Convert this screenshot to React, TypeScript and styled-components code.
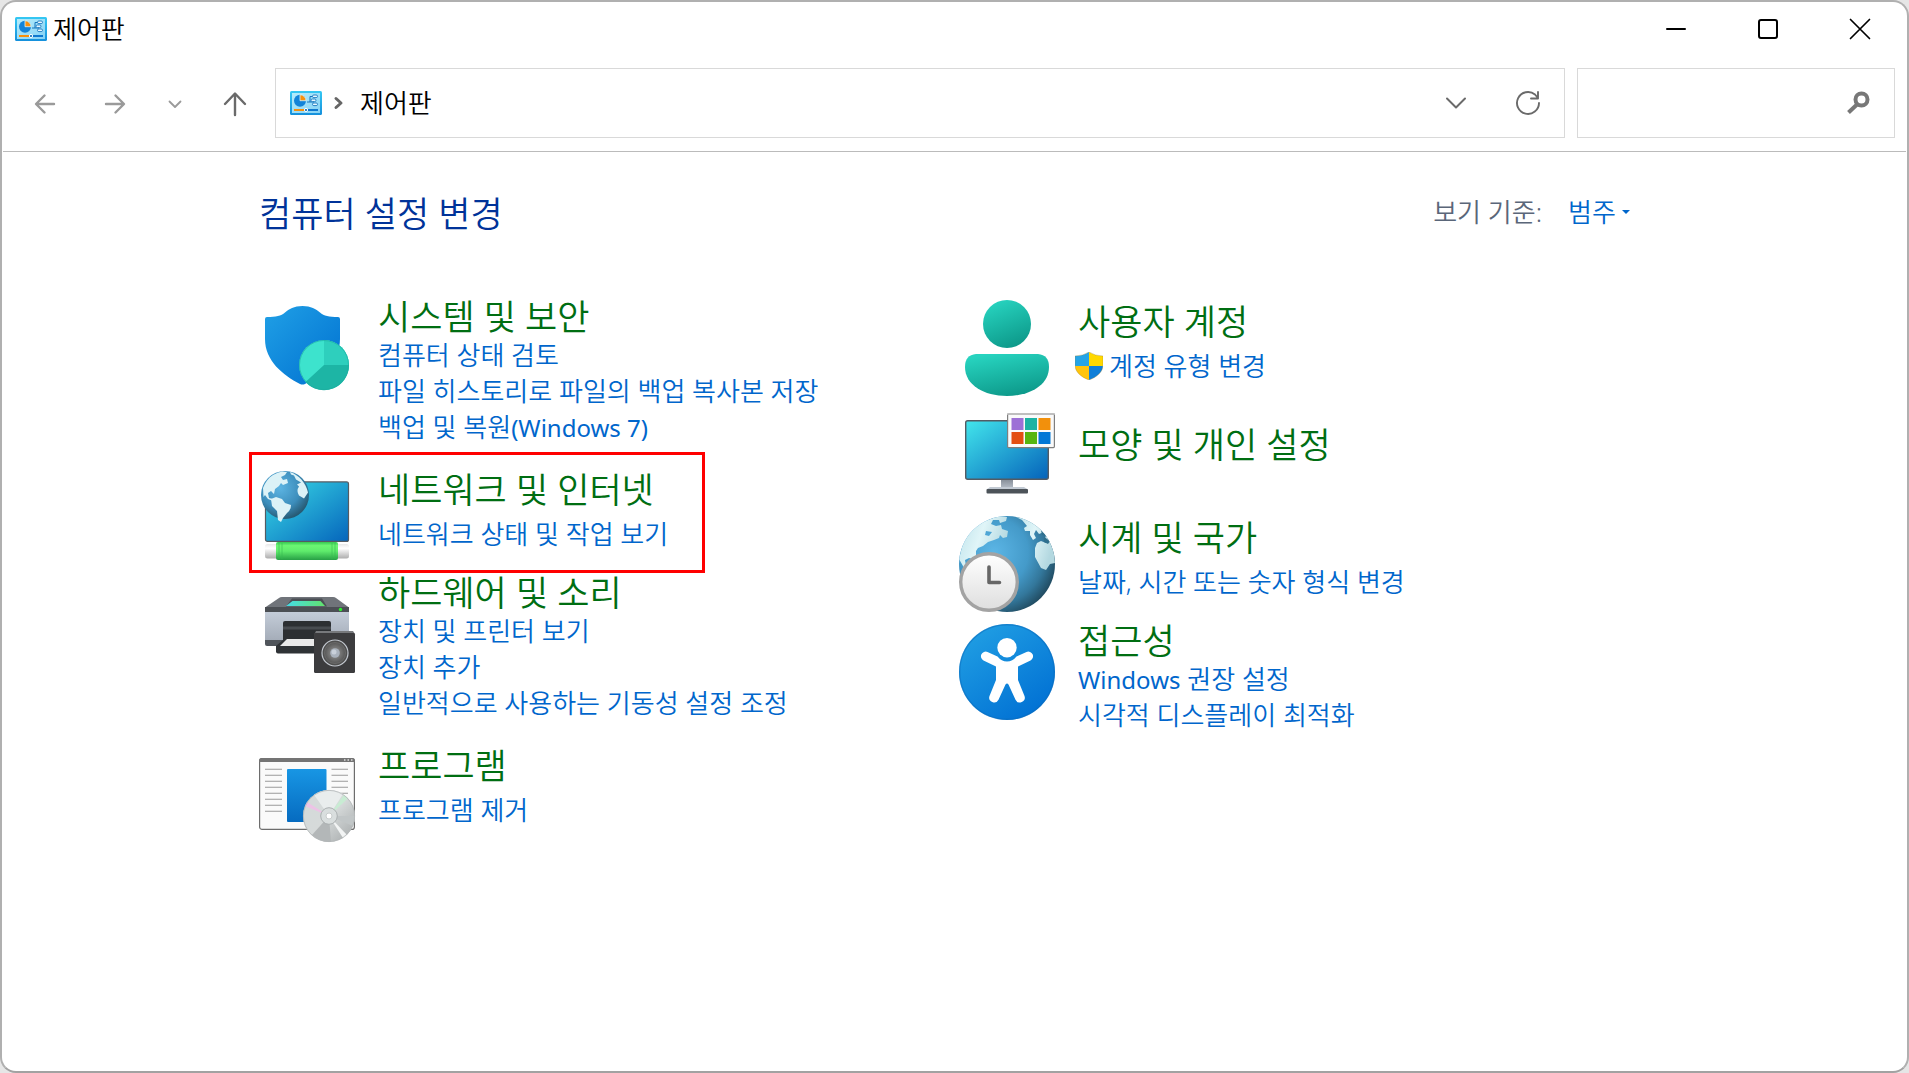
import React from "react";
import styled, { createGlobalStyle } from "styled-components";

const GlobalStyle = createGlobalStyle`
  *, *::before, *::after { box-sizing: border-box; }
  body {
    margin: 0;
    background: #e6e6e6;
    font-family: "Noto Sans", "Noto Sans CJK KR", sans-serif;
    font-size: 26px;
    font-weight: 350;
    color: #000;
  }
  h1, h2, ul { margin: 0; padding: 0; font-weight: inherit; }
  button, input, select { font: inherit; color: inherit; margin: 0; }
`;

const Window = styled.div`
  min-height: 100vh;
  border: 2px solid #b0b0b0;
  border-bottom-color: #a2a2a2;
  border-radius: 16px;
  background: #fff;
  overflow: hidden;
`;

const TitleBar = styled.header`
  display: flex;
  align-items: center;
  justify-content: space-between;
  height: 54px;
  padding: 0 1px 0 13px;
`;

const Caption = styled.div`
  display: flex;
  align-items: center;
  gap: 6px;
  line-height: 36px;
`;

const CaptionButtons = styled.div`
  display: flex;
`;

const CaptionButton = styled.button`
  display: grid;
  place-items: center;
  width: 92px;
  height: 54px;
  padding: 0;
  border: 0;
  background: transparent;
`;

const NavBar = styled.div`
  display: flex;
  align-items: center;
  margin: 0 1px;
  padding: 12px 11px 13px 7px;
  border-bottom: 1px solid #bbb;
`;

const NavButtons = styled.div`
  display: flex;
  padding-top: 2px;
  margin-right: 5px;
`;

const NavButton = styled.button<{ $width: number; $muted?: boolean }>`
  display: grid;
  place-items: center;
  width: ${(p) => p.$width}px;
  height: 68px;
  padding: 0;
  border: 0;
  background: transparent;
  color: ${(p) => (p.$muted ? "#9a9a9a" : "#6a6a6a")};
`;

const AddressBar = styled.nav`
  flex: 1;
  display: flex;
  align-items: center;
  gap: 12px;
  height: 70px;
  padding: 0 0 0 14px;
  border: 1px solid #d9d9d9;
`;

const Crumb = styled.a`
  margin-left: 5px;
  color: #000;
  text-decoration: none;
  line-height: 36px;
`;

const AddressActions = styled.div`
  display: flex;
  margin-left: auto;
`;

const SearchBox = styled.label`
  display: flex;
  align-items: center;
  width: 318px;
  height: 70px;
  margin-left: 12px;
  padding: 0 24px 0 12px;
  border: 1px solid #d9d9d9;
`;

const SearchInput = styled.input`
  flex: 1;
  min-width: 0;
  border: 0;
  outline: 0;
  background: transparent;
`;

const Content = styled.main`
  max-width: 1391px;
  margin: 0 auto;
  padding: 40px 0;
`;

const PageHeader = styled.div`
  display: flex;
  align-items: flex-start;
  justify-content: space-between;
  height: 44px;
  margin-bottom: 64px;
  padding-right: 20px;
`;

const PageTitle = styled.h1`
  font-size: 35px;
  line-height: 44px;
  color: #003399;
`;

const ViewBy = styled.div`
  display: flex;
  align-items: center;
  gap: 6px;
  line-height: 40px;
`;

const ViewByLabel = styled.label`
  margin-right: 20px;
  color: #5a6679;
`;

const ViewBySelect = styled.select`
  appearance: none;
  padding: 0;
  border: 0;
  background: transparent;
  color: #0066cc;
  line-height: 40px;
`;

const Columns = styled.div`
  display: grid;
  grid-template-columns: repeat(2, minmax(0, 1fr));
  column-gap: 9px;
  align-items: start;
`;

const Column = styled.div`
  display: flex;
  flex-direction: column;
  align-items: flex-start;
  gap: 12px;
`;

const Category = styled.section<{ $highlighted?: boolean }>`
  position: relative;
  display: flex;
  gap: 23px;
  min-height: 96px;

  ${(p) =>
    p.$highlighted &&
    `&::after {
      content: "";
      position: absolute;
      inset: -16px -37px -9px -10px;
      border: 3px solid #ff0000;
      pointer-events: none;
    }`}
`;

const CategoryText = styled.div<{ $layout: Layout }>`
  margin-top: ${(p) => ({ dense: "-3px", single: "2px", title: "17px" })[p.$layout]};
  padding-bottom: ${(p) => (p.$layout === "dense" ? "11px" : "0")};
`;

const CategoryTitle = styled.h2`
  font-size: 35px;
  line-height: 40px;
`;

const CategoryLink = styled.a`
  color: #006e12;
  text-decoration: none;
  &:hover { text-decoration: underline; }
`;

const TaskList = styled.ul<{ $layout: Layout; $shielded?: boolean }>`
  list-style: none;
  margin-top: ${(p) => (p.$layout === "single" ? "6px" : "0")};
  margin-left: ${(p) => (p.$shielded ? "-3px" : "0")};
`;

const TaskLink = styled.a`
  display: flex;
  align-items: center;
  gap: 6px;
  color: #0066cc;
  line-height: 36px;
  text-decoration: none;
  white-space: nowrap;
  &:hover { text-decoration: underline; }
`;

const Latin = styled.span`
  font-size: 24px;
  font-weight: 400;
  line-height: 1;
`;

const CategoryIcon = styled.svg`
  flex: none;
  display: block;
  width: 96px;
  height: 96px;
  overflow: visible;
`;

const LineIcon = styled.svg`
  display: block;
  overflow: visible;
  fill: none;
  stroke: currentColor;
  stroke-linecap: round;
  stroke-linejoin: round;
`;

type Layout = "dense" | "single" | "title";

function ControlPanelIcon() {
  return (
    <svg width="32" height="24" viewBox="0 0 32 24" aria-hidden="true">
      <defs>
        <linearGradient id="cpFrame" x1="0" y1="0" x2="0" y2="1">
          <stop offset="0" stopColor="#35c8f3" />
          <stop offset="1" stopColor="#1590dc" />
        </linearGradient>
        <linearGradient id="cpFace" x1="0" y1="0" x2="1" y2="1">
          <stop offset="0" stopColor="#b5ecfb" />
          <stop offset="1" stopColor="#86d2f5" />
        </linearGradient>
      </defs>
      <rect width="32" height="24" rx="1.5" fill="url(#cpFrame)" />
      <rect x="2" y="2" width="28" height="20" fill="url(#cpFace)" />
      <circle cx="10" cy="9.7" r="6" fill="#1283d8" />
      <path d="M10 9.7V3.7a6 6 0 0 1 6 6z" fill="#f7900d" stroke="#d9f5fd" strokeWidth=".8" />
      <path d="M17 11h3V5.5h4M20 11h4" fill="none" stroke="#1674bd" strokeWidth="1" />
      <rect x="22.5" y="4" width="5" height="2.6" rx="1.3" fill="#e9f9ff" stroke="#1674bd" strokeWidth=".9" />
      <rect x="21" y="8" width="5" height="2.6" rx="1.3" fill="#e9f9ff" stroke="#1674bd" strokeWidth=".9" />
      <rect x="22.5" y="12" width="5" height="2.6" rx="1.3" fill="#e9f9ff" stroke="#1674bd" strokeWidth=".9" />
      <path d="M4 19h11" stroke="#f7900d" strokeWidth="2" />
      <path d="M17 19h11" stroke="#0f78cf" strokeWidth="2" />
      <circle cx="16" cy="19" r="1.6" fill="#1674bd" stroke="#fff" strokeWidth="1" />
    </svg>
  );
}

function SecurityIcon() {
  return (
    <CategoryIcon viewBox="0 0 96 96" aria-hidden="true">
      <defs>
        <linearGradient id="secShield" x1="0" y1="0" x2="1" y2="1">
          <stop offset="0" stopColor="#20a0e6" />
          <stop offset="1" stopColor="#0070d0" />
        </linearGradient>
      </defs>
      <path
        d="M43.5 6C52 6 57 9 61 12.5c4 3.5 9 4.5 18 4.5q2 0 2 2v20c0 22-18 36-35 45q-2.5 1-5 0C24 75 6 61 6 39V19q0-2 2-2c9 0 14-1 18-4.5C30 9 35 6 43.5 6z"
        fill="url(#secShield)"
      />
      <circle cx="65" cy="65" r="25" fill="#3de3cd" />
      <path d="M65 65V40a25 25 0 0 1 25 25z" fill="#2ecfbd" />
      <path d="M65 65H90a25 25 0 0 1-43.5 17z" fill="#1db5a5" />
      <circle cx="65" cy="65" r="24.5" fill="none" stroke="#1eac9e" strokeOpacity=".6" />
    </CategoryIcon>
  );
}

function NetworkIcon() {
  return (
    <CategoryIcon viewBox="0 0 96 96" aria-hidden="true">
      <defs>
        <linearGradient id="netScreen" x1="0" y1="0" x2="1" y2="1">
          <stop offset="0" stopColor="#3adbe6" />
          <stop offset="1" stopColor="#0565bc" />
        </linearGradient>
        <linearGradient id="netCable" x1="0" y1="0" x2="0" y2="1">
          <stop offset="0" stopColor="#35c851" />
          <stop offset=".2" stopColor="#6cf673" />
          <stop offset=".5" stopColor="#5fec6c" />
          <stop offset="1" stopColor="#27a045" />
        </linearGradient>
        <linearGradient id="netPlug" x1="0" y1="0" x2="0" y2="1">
          <stop offset="0" stopColor="#e8e8e8" />
          <stop offset=".3" stopColor="#fff" />
          <stop offset="1" stopColor="#adadad" />
        </linearGradient>
        <radialGradient id="netOcean" cx=".4" cy=".35" r=".7">
          <stop offset="0" stopColor="#5cb4e2" />
          <stop offset=".6" stopColor="#3c8dbb" />
          <stop offset="1" stopColor="#245268" />
        </radialGradient>
      </defs>
      <rect x="6.5" y="13.9" width="83" height="59.5" rx="2" fill="url(#netScreen)" stroke="#555b62" strokeWidth="1.2" />
      <rect x="6" y="76" width="84" height="14.5" rx="2.5" fill="url(#netPlug)" />
      <rect x="17" y="74" width="62" height="18" rx="2" fill="url(#netCable)" />
      <path d="M20 75v16M23 75v16M73 75v16M76 75v16" stroke="#37bd50" strokeWidth="1" strokeOpacity=".6" />
      <circle cx="26" cy="27" r="24" fill="url(#netOcean)" />
      <g transform="translate(2 3)" fill="#dcf2f7">
        <path d="M2 17C4 12 7 7 12 4q5-3 9-3.5l5 .5-2 3-4 2 2 3 4-1 1 4-5 2-2-2-2 3-4 3-1 5-3-3-3 2 1 5 4 1v2l-5-2-3-4-1.5 2z" />
        <path d="M10 28l5-2 6 2 3 4 6 2q0 5-4 8l-4 5-2 4-3-2-1-9-5-5z" />
        <path d="M29 1c9 3 16 11 18 20.5l-2 3-2 3-5-3q-3-5 0-9l-2-2 4-2-5-3-2-4-3-1z" />
      </g>
    </CategoryIcon>
  );
}

function HardwareIcon() {
  return (
    <CategoryIcon viewBox="0 0 96 96" aria-hidden="true">
      <defs>
        <linearGradient id="hwBody" x1="0" y1="0" x2="0" y2="1">
          <stop offset="0" stopColor="#c9d2de" />
          <stop offset="1" stopColor="#a5adb9" />
        </linearGradient>
        <linearGradient id="hwPanel" x1="0" y1="0" x2="1" y2="0">
          <stop offset="0" stopColor="#45dce8" />
          <stop offset="1" stopColor="#62e26c" />
        </linearGradient>
        <radialGradient id="hwCone">
          <stop offset="0" stopColor="#9a9a9a" />
          <stop offset="1" stopColor="#474747" />
        </radialGradient>
      </defs>
      <path d="M23 21h51q2 0 3 1l13 9.5H6L20 22q1-1 3-1z" fill="#70747a" />
      <path d="M33 22.5h30l5 8H27z" fill="#4b4f55" />
      <path d="M33.5 25h28l4.5 5H27z" fill="url(#hwPanel)" />
      <path d="M6 31h84v33H6z" fill="url(#hwBody)" />
      <path d="M6 31h84v5H6z" fill="#4b4f54" />
      <path d="M6 64h84v4q0 2-2 2H8q-2 0-2-2z" fill="#50555b" />
      <circle cx="81.5" cy="33.5" r="1.7" fill="#2df02d" />
      <path d="M24 65V47q0-2 2-2h44q2 0 2 2v18z" fill="#2c2f32" />
      <path d="M24 52h48" stroke="#484c50" strokeWidth="3" />
      <path d="M17 70l8-7h50v14.5H19q-2 0-2-2z" fill="#2f3336" />
      <path d="M21 70l7-7h42v7z" fill="#e9e9e9" />
      <path d="M57 55h37l2 3-41 1z" fill="#77797c" />
      <rect x="55" y="57" width="41" height="40" rx="1.5" fill="#3c3c3e" />
      <circle cx="76" cy="77" r="13" fill="url(#hwCone)" stroke="#c4c9d0" strokeWidth="1.2" />
      <circle cx="76" cy="77" r="10.5" fill="none" stroke="#6d6d6d" strokeWidth=".8" />
      <circle cx="76" cy="77" r="4.8" fill="#aab2bd" />
      <circle cx="75" cy="76" r="2.5" fill="#c9d0da" />
    </CategoryIcon>
  );
}

function ProgramsIcon() {
  const lines = [25.3, 31.3, 37.3, 43.3, 49.3, 55.3, 61.3, 67.3];
  return (
    <CategoryIcon viewBox="0 0 96 96" aria-hidden="true">
      <defs>
        <linearGradient id="prgDoc" x1="0" y1="0" x2="0" y2="1">
          <stop offset="0" stopColor="#1896e4" />
          <stop offset="1" stopColor="#066bc0" />
        </linearGradient>
        <linearGradient id="prgDisc" x1="0" y1="0" x2="1" y2="1">
          <stop offset="0" stopColor="#d4dada" />
          <stop offset=".5" stopColor="#d6dada" />
          <stop offset="1" stopColor="#a3a7a8" />
        </linearGradient>
      </defs>
      <rect x=".6" y="14.6" width="94.8" height="70.8" rx="2.5" fill="#fafafa" stroke="#6d6d6d" strokeWidth="1.2" />
      <path d="M0 18v-1q0-3 3-3h90q3 0 3 3v1z" fill="#747474" />
      <path d="M85 16h1.5M88.5 16H90M92 16h1.5" stroke="#ddd" strokeWidth="1.4" />
      {lines.map((y) => (
        <path key={y} d={`M6 ${y}H23M72.5 ${y}H89`} stroke="#9b9b9b" strokeWidth="1.1" />
      ))}
      <rect x="28" y="25" width="39.5" height="53" rx="1" fill="url(#prgDoc)" />
      <circle cx="70" cy="72" r="26" fill="url(#prgDisc)" />
      <path d="M70 72L55 50.8A26 26 0 0 1 84 50z" fill="#e9eded" />
      <path d="M70 72L46 62l2-4z" fill="#edc3e6" />
      <path d="M70 72L85 50.8l4 3.5z" fill="#c8ecd3" />
      <path d="M70 72L96 72a26 26 0 0 1-2 10z" fill="#c1c6c7" />
      <path d="M70 72L88 91l-4 3z" fill="#f2f4f4" />
      <path d="M70 72L72 98a26 26 0 0 1-19-7z" fill="#b3b7b8" />
      <circle cx="70" cy="72" r="25.6" fill="none" stroke="#b2b6b7" strokeWidth=".8" />
      <circle cx="70" cy="72" r="8.3" fill="#d9dede" stroke="#abb0b1" strokeWidth="1" />
      <circle cx="70" cy="72" r="3" fill="#fff" stroke="#c9cdcd" strokeWidth="1" />
    </CategoryIcon>
  );
}

function UserIcon() {
  return (
    <CategoryIcon viewBox="0 0 96 96" aria-hidden="true">
      <defs>
        <linearGradient id="usrTeal" x1=".3" y1="0" x2=".7" y2="1">
          <stop offset="0" stopColor="#27d3bf" />
          <stop offset="1" stopColor="#0c9788" />
        </linearGradient>
      </defs>
      <circle cx="48" cy="24" r="24" fill="url(#usrTeal)" />
      <path d="M17 54H79q11 1 11 13C90 85 71 96 48 96S6 85 6 67Q6 55 17 54z" fill="url(#usrTeal)" />
    </CategoryIcon>
  );
}

function AppearanceIcon() {
  const tiles = ["#9d70d6", "#1cb3a3", "#f2900c", "#e34f12", "#57b510", "#0378d6"];
  return (
    <CategoryIcon viewBox="0 0 96 96" aria-hidden="true">
      <defs>
        <linearGradient id="appScreen" x1="0" y1="0" x2="1" y2="1">
          <stop offset="0" stopColor="#42e6ec" />
          <stop offset="1" stopColor="#0562ba" />
        </linearGradient>
        <linearGradient id="appStand" x1="0" y1="0" x2="0" y2="1">
          <stop offset="0" stopColor="#838b95" />
          <stop offset="1" stopColor="#b4bcc6" />
        </linearGradient>
      </defs>
      <rect x="42" y="71" width="12" height="9" fill="url(#appStand)" />
      <path d="M31 79h34l4 2.5H27.5z" fill="#c2cad3" />
      <rect x="27.5" y="81" width="41.5" height="4.5" rx="1" fill="#4c5359" />
      <rect x="6.7" y="12.7" width="82.6" height="58.6" rx="2" fill="url(#appScreen)" stroke="#545b63" strokeWidth="1.4" />
      <rect x="48.6" y="6" width="46.8" height="33.6" rx="1" fill="#fafafa" stroke="#7f7f7f" strokeWidth="1.2" />
      <path d="M48 6h48" stroke="#bfbfbf" strokeWidth="1.5" />
      {tiles.map((fill, i) => (
        <rect key={fill} x={52.5 + (i % 3) * 13.5} y={10 + Math.floor(i / 3) * 14} width="12" height="12" fill={fill} />
      ))}
    </CategoryIcon>
  );
}

function ClockIcon() {
  return (
    <CategoryIcon viewBox="0 0 96 96" aria-hidden="true">
      <defs>
        <radialGradient id="clkOcean" cx=".36" cy=".38" r=".72">
          <stop offset="0" stopColor="#5cb6e6" />
          <stop offset=".5" stopColor="#449ac9" />
          <stop offset=".75" stopColor="#33779b" />
          <stop offset="1" stopColor="#1c4052" />
        </radialGradient>
        <linearGradient id="clkLand" x1="0" y1="0" x2="1" y2=".4">
          <stop offset="0" stopColor="#bde2ea" />
          <stop offset=".5" stopColor="#e0f5f8" />
          <stop offset="1" stopColor="#b3d8e0" />
        </linearGradient>
        <linearGradient id="clkFace" x1="0" y1="0" x2="0" y2="1">
          <stop offset="0" stopColor="#fff" />
          <stop offset="1" stopColor="#dedede" />
        </linearGradient>
        <clipPath id="clkClip"><circle cx="48" cy="48" r="48" /></clipPath>
      </defs>
      <circle cx="48" cy="48" r="48" fill="url(#clkOcean)" />
      <g clipPath="url(#clkClip)">
        <path
          d="M3 31Q9 13 26 5L40 0l8 1-1 4-6 2-1-3-6 0-2 4 5 2 5-1 1 4 6 2-1 6-4 1-3-3-1 3-5 2-6 2-5 4-5 2-2 3 0 7 2 4-2 1-3-4-4-1-4 2 1 6 4 4-3 2-4-6-4-7zM27 15l-1 4 4 1 3-4z"
          fill="url(#clkLand)"
          fillRule="evenodd"
        />
        <path
          d="M57 1q20 2 31 20 8 12 8 26l-5 1-4 6-5-2-6-11v-9l2-5 4-2 5 2 2-2-3-4 3-2-4-3-5 2-3-4-2 4 2 4-3 2-3-5 0-4-5 0-1-3 3-2-5-6z"
          fill="url(#clkLand)"
        />
        <path d="M82 14l5 6-4-1zM85 21l6 4-2 3-4-2z" fill="#2f6f8d" />
      </g>
      <circle cx="30" cy="66" r="28.3" fill="url(#clkFace)" stroke="#a3a3a3" strokeWidth="3.4" />
      <path d="M30 51v15.5h10.5" fill="none" stroke="#666" strokeWidth="3.6" strokeLinecap="round" strokeLinejoin="round" />
    </CategoryIcon>
  );
}

function AccessibilityIcon() {
  return (
    <CategoryIcon viewBox="0 0 96 96" aria-hidden="true">
      <defs>
        <linearGradient id="accBlue" x1=".1" y1="0" x2=".8" y2="1">
          <stop offset="0" stopColor="#22a1e4" />
          <stop offset="1" stopColor="#006fd3" />
        </linearGradient>
      </defs>
      <circle cx="48" cy="48" r="48" fill="url(#accBlue)" />
      <circle cx="48" cy="48" r="47.3" fill="none" stroke="#0c6cbb" strokeOpacity=".5" strokeWidth="1.4" />
      <circle cx="48" cy="23.7" r="9.7" fill="#fff" />
      <path
        d="M28.5 28l10 4.5q4 5 9.5 5t9.5-5l10-4.5a4.7 4.7 0 0 1 4 8.5L59 42.5V56l6.5 16a4.9 4.9 0 0 1-9 3.8L49.5 60.5q-1.5-2-3 0L39.5 75.8a4.9 4.9 0 0 1-9-3.8L37 56V42.5L24.5 36.5a4.7 4.7 0 0 1 4-8.5z"
        fill="#fff"
      />
    </CategoryIcon>
  );
}

function UacShieldIcon() {
  const outline = "M14 0Q20 4 28 4v9c0 7-6 12-14 15C6 25 0 20 0 13V4Q8 4 14 0z";
  return (
    <svg width="28" height="28" viewBox="0 0 28 28" aria-hidden="true">
      <defs>
        <clipPath id="uacClip"><path d={outline} /></clipPath>
      </defs>
      <g clipPath="url(#uacClip)">
        <path d="M0 0h14v14H0z" fill="#25a4e6" />
        <path d="M14 0h14v14H14z" fill="#ffd800" />
        <path d="M0 14h14v14H0z" fill="#ffc40c" />
        <path d="M14 14h14v14H14z" fill="#0f7fd8" />
      </g>
      <path d={outline} fill="none" stroke="#9a8232" strokeOpacity=".35" />
    </svg>
  );
}

/* Sets Latin runs a step smaller so they sit evenly beside the Hangul. */
function MixedText({ text }: { text: string }) {
  const parts = text.split(/([A-Za-z0-9()][A-Za-z0-9() ]*[A-Za-z0-9()])/);
  return (
    <span>
      {parts.map((part, i) => (i % 2 === 1 ? <Latin key={i}>{part}</Latin> : part))}
    </span>
  );
}

type CategoryData = {
  title: string;
  tasks: string[];
  layout: Layout;
  Icon: () => React.JSX.Element;
  highlighted?: boolean;
  shielded?: boolean;
};

const columns: CategoryData[][] = [
  [
    {
      title: "시스템 및 보안",
      tasks: ["컴퓨터 상태 검토", "파일 히스토리로 파일의 백업 복사본 저장", "백업 및 복원(Windows 7)"],
      layout: "dense",
      Icon: SecurityIcon,
    },
    {
      title: "네트워크 및 인터넷",
      tasks: ["네트워크 상태 및 작업 보기"],
      layout: "single",
      Icon: NetworkIcon,
      highlighted: true,
    },
    {
      title: "하드웨어 및 소리",
      tasks: ["장치 및 프린터 보기", "장치 추가", "일반적으로 사용하는 기동성 설정 조정"],
      layout: "dense",
      Icon: HardwareIcon,
    },
    { title: "프로그램", tasks: ["프로그램 제거"], layout: "single", Icon: ProgramsIcon },
  ],
  [
    { title: "사용자 계정", tasks: ["계정 유형 변경"], layout: "single", Icon: UserIcon, shielded: true },
    { title: "모양 및 개인 설정", tasks: [], layout: "title", Icon: AppearanceIcon },
    { title: "시계 및 국가", tasks: ["날짜, 시간 또는 숫자 형식 변경"], layout: "single", Icon: ClockIcon },
    {
      title: "접근성",
      tasks: ["Windows 권장 설정", "시각적 디스플레이 최적화"],
      layout: "dense",
      Icon: AccessibilityIcon,
    },
  ],
];

export default function App() {
  return (
    <>
      <GlobalStyle />
      <Window>
        <TitleBar>
          <Caption>
            <ControlPanelIcon />
            <span>제어판</span>
          </Caption>
          <CaptionButtons>
            <CaptionButton type="button" aria-label="최소화">
              <LineIcon width="20" height="20" strokeWidth="2">
                <path d="M1 10h18" />
              </LineIcon>
            </CaptionButton>
            <CaptionButton type="button" aria-label="최대화">
              <LineIcon width="20" height="20" strokeWidth="2">
                <rect x="1" y="1" width="18" height="18" rx="2" />
              </LineIcon>
            </CaptionButton>
            <CaptionButton type="button" aria-label="닫기">
              <LineIcon width="20" height="20" strokeWidth="1.7">
                <path d="M.5.5l19 19M19.5.5l-19 19" />
              </LineIcon>
            </CaptionButton>
          </CaptionButtons>
        </TitleBar>

        <NavBar>
          <NavButtons>
            <NavButton type="button" $width={70} $muted aria-label="뒤로">
              <LineIcon width="20" height="20" strokeWidth="2.4">
                <path d="M19 10H1.5M9.5 1.5L1 10l8.5 8.5" />
              </LineIcon>
            </NavButton>
            <NavButton type="button" $width={70} $muted aria-label="앞으로">
              <LineIcon width="20" height="20" strokeWidth="2.4">
                <path d="M1 10h17.5M10.5 1.5L19 10l-8.5 8.5" />
              </LineIcon>
            </NavButton>
            <NavButton type="button" $width={50} $muted aria-label="최근 위치">
              <LineIcon width="12" height="7" strokeWidth="1.8">
                <path d="M.5.5L6 6 11.5.5" />
              </LineIcon>
            </NavButton>
            <NavButton type="button" $width={70} aria-label="위로">
              <LineIcon width="22" height="24" strokeWidth="2.4">
                <path d="M11 23V2M1 12L11 1.5 21 12" />
              </LineIcon>
            </NavButton>
          </NavButtons>
          <AddressBar aria-label="주소">
            <ControlPanelIcon />
            <LineIcon width="9" height="12" strokeWidth="3" color="#666">
              <path d="M2 1.5L7 6l-5 4.5" />
            </LineIcon>
            <Crumb href="#">제어판</Crumb>
            <AddressActions>
              <NavButton type="button" $width={72} aria-label="이전 위치">
                <LineIcon width="18" height="10" strokeWidth="2">
                  <path d="M0 .5l9 9 9-9" />
                </LineIcon>
              </NavButton>
              <NavButton type="button" $width={72} aria-label="새로 고침">
                <LineIcon width="24" height="24" strokeWidth="1.9">
                  <path d="M23 12A11 11 0 1 1 19 3.5L22 7M22 1v6.5h-7" />
                </LineIcon>
              </NavButton>
            </AddressActions>
          </AddressBar>
          <SearchBox>
            <SearchInput type="search" aria-label="제어판 검색" />
            <LineIcon width="24" height="24" color="#777">
              <circle cx="15.5" cy="8.5" r="6" strokeWidth="4" />
              <path d="M11 13.5L2.5 21.5" strokeWidth="4" strokeLinecap="butt" />
            </LineIcon>
          </SearchBox>
        </NavBar>

        <Content>
          <PageHeader>
            <PageTitle>컴퓨터 설정 변경</PageTitle>
            <ViewBy>
              <ViewByLabel htmlFor="view-by">보기 기준:</ViewByLabel>
              <ViewBySelect id="view-by" defaultValue="category">
                <option value="category">범주</option>
              </ViewBySelect>
              <svg width="8" height="4" viewBox="0 0 8 4" aria-hidden="true">
                <path d="M0 0h8L4 4z" fill="#0066cc" />
              </svg>
            </ViewBy>
          </PageHeader>

          <Columns>
            {columns.map((items, index) => (
              <Column key={index}>
                {items.map(({ title, tasks, layout, Icon, highlighted, shielded }) => (
                  <Category key={title} $highlighted={highlighted}>
                    <Icon />
                    <CategoryText $layout={layout}>
                      <CategoryTitle>
                        <CategoryLink href="#">{title}</CategoryLink>
                      </CategoryTitle>
                      {tasks.length > 0 && (
                        <TaskList $layout={layout} $shielded={shielded}>
                          {tasks.map((task) => (
                            <li key={task}>
                              <TaskLink href="#">
                                {shielded && <UacShieldIcon />}
                                <MixedText text={task} />
                              </TaskLink>
                            </li>
                          ))}
                        </TaskList>
                      )}
                    </CategoryText>
                  </Category>
                ))}
              </Column>
            ))}
          </Columns>
        </Content>
      </Window>
    </>
  );
}
